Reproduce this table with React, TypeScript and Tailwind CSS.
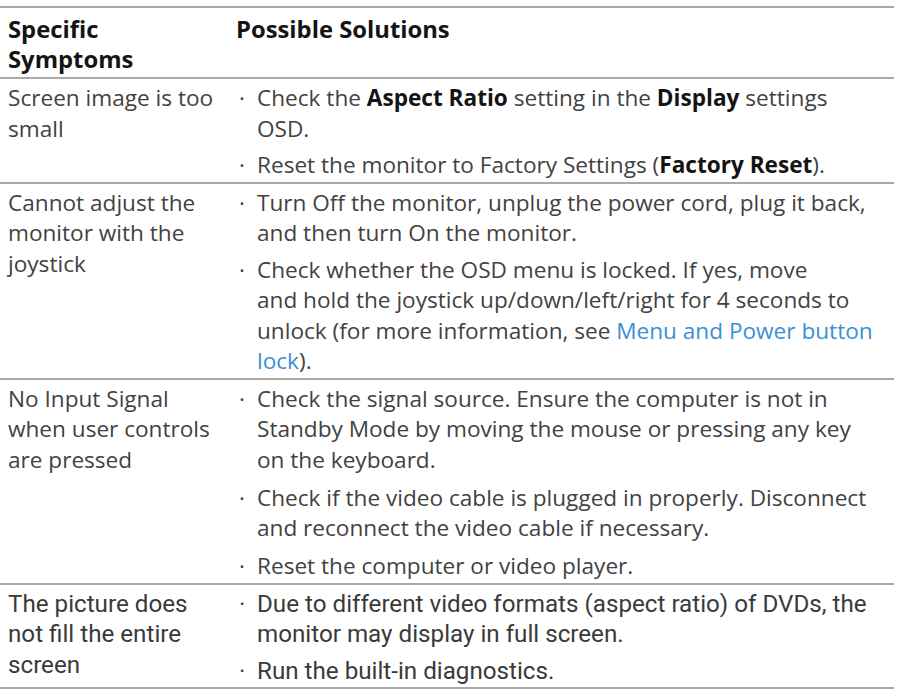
import React from "react";

const Bullet = ({ children, first, gap = "mt-[6px]" }: { children: React.ReactNode; first?: boolean; gap?: string }) => (
  <div className={`flex ${first ? "" : gap}`}>
    <span className="w-[21px] shrink-0 pl-[3px]">·</span>
    <span className="flex-1 whitespace-nowrap">{children}</span>
  </div>
);

const B = ({ children }: { children: React.ReactNode }) => (
  <span className="font-bold text-[#141414]">{children}</span>
);

const Row = ({ left, children, cls = "" }: { left: React.ReactNode; children: React.ReactNode; cls?: string }) => (
  <div className={`grid grid-cols-[236px_1fr] border-b-2 border-[#a9a9a9] pt-[4px] pb-[1px] ${cls}`}>
    <div className="pl-[8px] whitespace-nowrap">{left}</div>
    <div>{children}</div>
  </div>
);

export default function App() {
  return (
    <div className="w-[905px] h-[697px] bg-white pt-[6px] font-['Open_Sans']">
      <div className="w-[894px] text-[22.6px] leading-[30.5px] text-[#424242]">
        <div className="grid grid-cols-[236px_1fr] border-t-2 border-b-2 border-[#a9a9a9] pt-[6px] pb-[3px] font-bold text-[#141414] text-[23.8px] leading-[30px]">
          <div className="pl-[8px]">Specific<br />Symptoms</div>
          <div>Possible Solutions</div>
        </div>
        <Row left={<>Screen image is too<br />small</>}>
          <Bullet first>
            Check the <B>Aspect Ratio</B> setting in the <B>Display</B> settings<br />OSD.
          </Bullet>
          <Bullet>
            Reset the monitor to Factory Settings (<B>Factory Reset</B>).
          </Bullet>
        </Row>
        <Row left={<>Cannot adjust the<br />monitor with the<br />joystick</>}>
          <Bullet first>
            Turn Off the monitor, unplug the power cord, plug it back,<br />and then turn On the monitor.
          </Bullet>
          <Bullet>
            Check whether the OSD menu is locked. If yes, move<br />and hold the joystick up/down/left/right for 4 seconds to
            <br />
            unlock (for more information, see <span className="text-[#3b8fd4]">Menu and Power button<br />lock</span>).
          </Bullet>
        </Row>
        <Row left={<>No Input Signal<br />when user controls<br />are pressed</>}>
          <Bullet first>
            Check the signal source. Ensure the computer is not in<br />Standby Mode by moving the mouse or pressing any key
            <br />
            on the keyboard.
          </Bullet>
          <Bullet gap="mt-[7.5px]">
            Check if the video cable is plugged in properly. Disconnect<br />and reconnect the video cable if necessary.
          </Bullet>
          <Bullet gap="mt-[7.5px]">Reset the computer or video player.</Bullet>
        </Row>
        <Row left={<>The picture does<br />not fill the entire<br />screen</>} cls="font-['Roboto'] text-[24.2px] text-[#3a3a3a]">
          <Bullet first>
            Due to different video formats (aspect ratio) of DVDs, the<br />monitor may display in full screen.
          </Bullet>
          <Bullet>Run the built-in diagnostics.</Bullet>
        </Row>
      </div>
    </div>
  );
}
